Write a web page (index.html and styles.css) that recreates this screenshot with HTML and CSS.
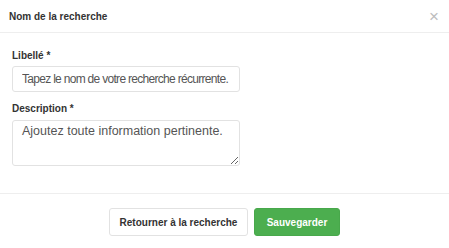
FILE: index.html
```html
<!DOCTYPE html>
<html lang="fr">
<head>
    <meta charset="UTF-8">
    <title>Nom de la recherche</title>
    <link rel="stylesheet" href="styles.css">
</head>
<body>
    <div class="modal">
        <div class="modal-header">
            <h4 class="modal-title">Nom de la recherche</h4>
            <button class="close">&times;</button>
        </div>
        <div class="modal-body">
            <div class="form-group">
                <label for="libelle">Libellé *</label>
                <input id="libelle" class="form-control input-name" type="text" placeholder="Tapez le nom de votre recherche récurrente.">
            </div>
            <div class="form-group">
                <label for="description">Description *</label>
                <textarea id="description" class="form-control input-desc" placeholder="Ajoutez toute information pertinente."></textarea>
            </div>
        </div>
        <div class="modal-footer">
            <button class="btn btn-default">Retourner à la recherche</button>
            <button class="btn btn-success">Sauvegarder</button>
        </div>
    </div>
</body>
</html>
```

FILE: styles.css
```css
body {
    margin: 0;
    font-family: "Liberation Sans", Arial, sans-serif;
    background: white;
    color: #333;
}

.modal {
    width: 449px;
    height: 248px;
    background: white;
}

.modal-header {
    height: 32px;
    display: flex;
    align-items: center;
    justify-content: space-between;
    padding: 0 9px;
    border-bottom: 1px solid #eee;
}

.modal-title {
    margin: 0;
    font-size: 10px;
    font-weight: bold;
    color: #333;
}

.close {
    border: 0;
    background: none;
    padding: 0;
    margin-right: 1px;
    font-size: 17px;
    line-height: 1;
    color: #bdbdbd;
    font-family: "Liberation Sans", Arial, sans-serif;
}

.modal-body {
    height: 160px;
    padding: 0 12px;
    box-sizing: border-box;
}

.form-group label {
    display: block;
    font-size: 10px;
    font-weight: bold;
    color: #333;
}

.form-group:first-child label {
    padding-top: 17px;
    margin-bottom: 5px;
}

.form-group:last-child label {
    padding-top: 11px;
    margin-bottom: 6px;
}

.form-control {
    display: block;
    box-sizing: border-box;
    border: 1px solid #e2e2e2;
    border-radius: 3px;
    font-family: "Liberation Sans", Arial, sans-serif;
    font-size: 12.5px;
    color: #555;
    background: white;
    margin: 0;
}

.form-control::placeholder {
    color: #555;
}

.input-name {
    width: 228px;
    height: 26px;
    padding: 0 9px;
    font-size: 12px;
    letter-spacing: -0.7px;
}

.input-desc {
    width: 228px;
    height: 46px;
    padding: 3px 9px;
    resize: vertical;
}

.modal-footer {
    border-top: 1px solid #eee;
    display: flex;
    justify-content: center;
    gap: 6px;
    padding-top: 14px;
}

.btn {
    height: 28px;
    box-sizing: border-box;
    border-radius: 3px;
    font-family: "Liberation Sans", Arial, sans-serif;
    font-size: 10px;
    font-weight: bold;
    padding: 0;
    white-space: nowrap;
}

.btn-default {
    width: 139px;
    background: white;
    border: 1px solid #e2e2e2;
    color: #333;
}

.btn-success {
    width: 86px;
    background: #4cae4f;
    border: 1px solid #48a84b;
    color: white;
}
```
